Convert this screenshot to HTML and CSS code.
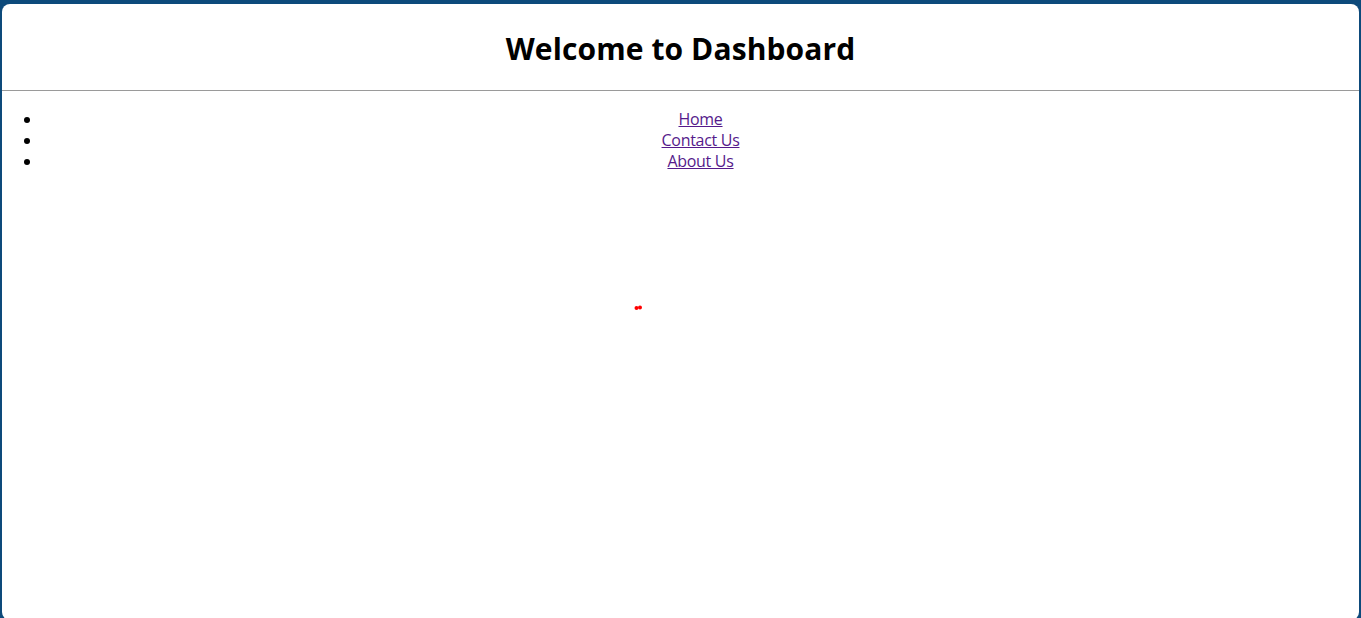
FILE: index.html
```html
<!DOCTYPE html>
<html>
<head>
<meta charset="utf-8">
<link rel="stylesheet" href="styles.css">
</head>
<body>
<div class="panel">
  <header class="header">
    <h1 class="title">Welcome to Dashboard</h1>
  </header>
  <ul class="nav">
    <li><a href="#home">Home</a></li>
    <li><a href="#contact">Contact Us</a></li>
    <li><a href="#about">About Us</a></li>
  </ul>
  <div class="stage">
    <svg class="dots" width="10" height="6" viewBox="0 0 10 6"><circle cx="2.5" cy="3" r="2" fill="#f00"/><circle cx="6" cy="2.6" r="2" fill="#f00"/></svg>
  </div>
</div>
</body>
</html>
```

FILE: styles.css
```css
html, body {
  margin: 0;
  padding: 0;
  height: 100%;
}
body {
  background: #0d4a7b;
  font-family: "Open Sans", "Noto Sans", sans-serif;
  overflow: hidden;
}
.panel {
  background: #fff;
  margin: 4px 2px 0 2px;
  height: 616px;
  border-radius: 8px;
  display: flex;
  flex-direction: column;
}
.header {
  border-bottom: 1px solid #9a9a9a;
  height: 86px;
  display: flex;
  align-items: center;
  justify-content: center;
}
.title {
  margin: 2px 0 0 0;
  font-size: 30px;
  font-weight: 700;
  color: #000;
  letter-spacing: 0.1px;
}
.nav {
  margin: 18px 0 0 0;
  padding-left: 40px;
  font-size: 16px;
  line-height: 21px;
  text-align: center;
  letter-spacing: -0.3px;
}
.nav a {
  color: #551a8b;
}
.stage {
  position: relative;
  flex: 1;
}
.dots {
  position: absolute;
  left: 632px;
  top: 133px;
}
```
